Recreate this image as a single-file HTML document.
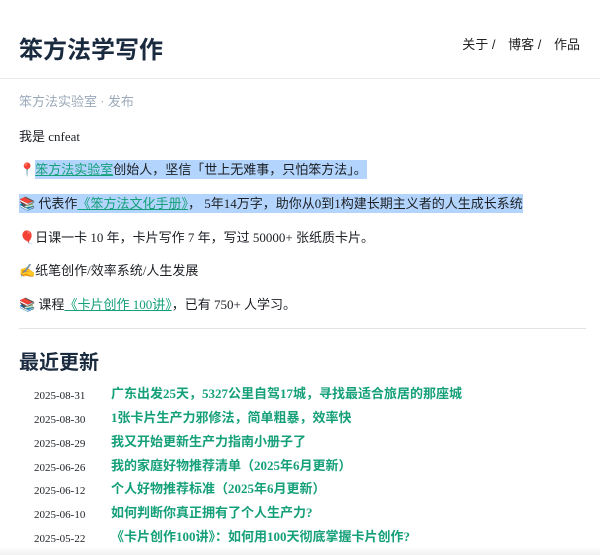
<!DOCTYPE html>
<html><head><meta charset="utf-8"><style>
*{margin:0;padding:0;box-sizing:border-box}
body{width:600px;height:555px;overflow:hidden;background:#fff;font-family:"Liberation Serif","Noto Sans CJK SC",sans-serif;color:#1b1f24;position:relative}
.hdr{position:absolute;left:0;top:0;width:600px;height:79px;border-bottom:1px solid #e8e8e8}
.title{position:absolute;left:19px;top:30px;font:bold 24px "Liberation Sans","Noto Sans CJK SC",sans-serif;color:#1a2a3f}
.nav{position:absolute;right:20px;top:34px;font:13px "Liberation Sans","Noto Sans CJK SC",sans-serif;color:#222}
.nav span{margin-left:9px}
.p{position:absolute;left:19px;font-size:13px;line-height:18px;white-space:nowrap}
.g{color:#9aa9ba}
a{color:#15a07a;text-decoration:underline}
.sel{background:#b3d4fc;padding:2px 0}
.hr{position:absolute;left:19px;width:567px;top:328px;border-top:1px solid #e3e3e3}
h2{position:absolute;left:19px;top:346px;font:bold 20px "Liberation Sans","Noto Sans CJK SC",sans-serif;color:#1a2a3f}
.row{position:absolute;left:34px;font-size:11px;white-space:nowrap;line-height:16px}
.row b{position:absolute;left:77px;top:-2px;font-size:13px;color:#15a07a;font-family:"Liberation Serif","Noto Sans CJK SC",sans-serif}
.foot{position:absolute;left:0;top:547px;width:600px;height:8px;background:linear-gradient(#fff,#f1f1f1)}
</style></head><body>
<div class="hdr"><div class="title">笨方法学写作</div>
<div class="nav">关于 / <span>博客 /</span> <span>作品</span></div></div>
<div class="p g" style="top:93px">笨方法实验室 · 发布</div>
<div class="p" style="top:128px">我是 cnfeat</div>
<div class="p" style="top:161px">📍<span class="sel"><a>笨方法实验室</a>创始人，坚信「世上无难事，只怕笨方法」。</span></div>
<div class="p" style="top:195px"><span class="sel">📚 代表作<a>《笨方法文化手册》</a>， 5年14万字，助你从0到1构建长期主义者的人生成长系统</span></div>
<div class="p" style="top:229px">🎈日课一卡 10 年，卡片写作 7 年，写过 50000+ 张纸质卡片。</div>
<div class="p" style="top:262px">✍️纸笔创作/效率系统/人生发展</div>
<div class="p" style="top:296px">📚 课程<a>《卡片创作 100讲》</a>，已有 750+ 人学习。</div>
<div class="hr"></div>
<h2>最近更新</h2>
<div class="row" style="top:388px">2025-08-31<b>广东出发25天，5327公里自驾17城，寻找最适合旅居的那座城</b></div>
<div class="row" style="top:412px">2025-08-30<b>1张卡片生产力邪修法，简单粗暴，效率快</b></div>
<div class="row" style="top:436px">2025-08-29<b>我又开始更新生产力指南小册子了</b></div>
<div class="row" style="top:460px">2025-06-26<b>我的家庭好物推荐清单（2025年6月更新）</b></div>
<div class="row" style="top:483px">2025-06-12<b>个人好物推荐标准（2025年6月更新）</b></div>
<div class="row" style="top:507px">2025-06-10<b>如何判断你真正拥有了个人生产力?</b></div>
<div class="row" style="top:531px">2025-05-22<b>《卡片创作100讲》：如何用100天彻底掌握卡片创作?</b></div>
<div class="foot"></div>
</body></html>
